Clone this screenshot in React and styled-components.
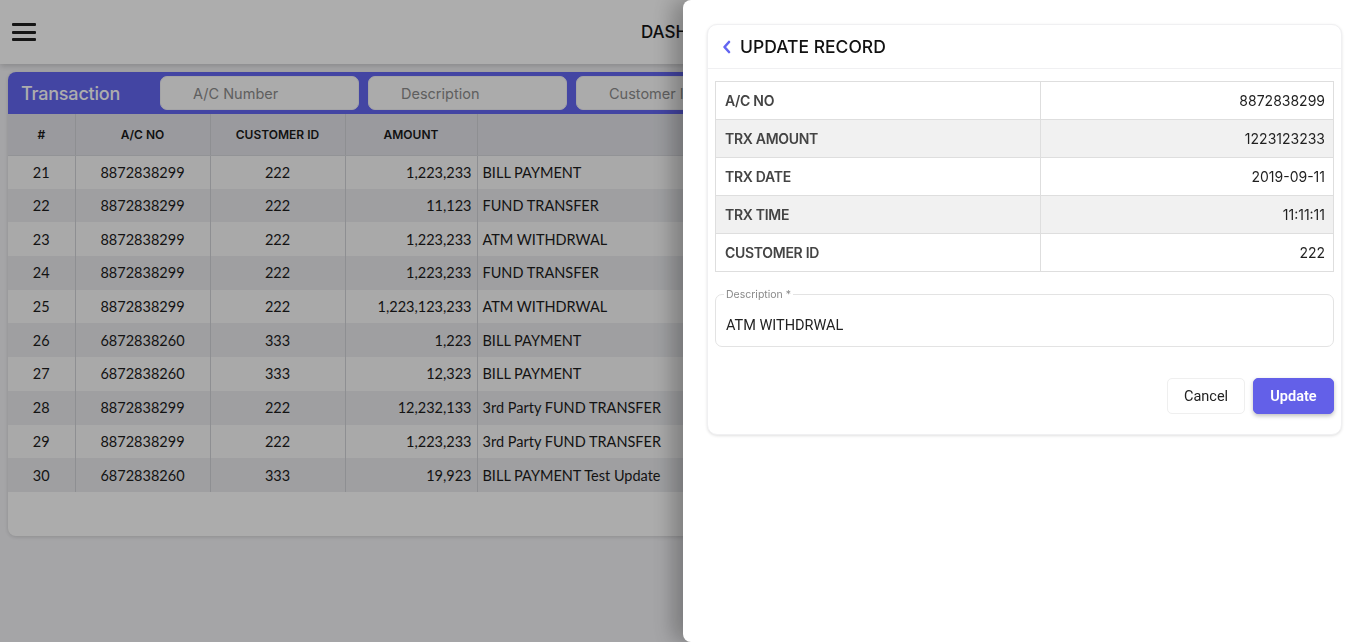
import React from 'react';
import styled, { createGlobalStyle } from 'styled-components';

const GlobalStyle = createGlobalStyle`
  html, body {
    margin: 0;
    padding: 0;
    background: #f4f4f7;
    font-family: Inter, "Liberation Sans", sans-serif;
    overflow: hidden;
  }
  * { box-sizing: border-box; }
`;

const Page = styled.div`
  height: 642px;
  display: flex;
  flex-direction: column;
  gap: 8px;
`;

const TopBar = styled.header`
  height: 64px;
  background: #ffffff;
  box-shadow: 0 2px 6px rgba(0, 0, 0, 0.18);
  display: flex;
  align-items: center;
  padding: 0 12px;
`;

const Burger = styled.button`
  width: 24px;
  height: 18px;
  border: none;
  background: transparent;
  padding: 0;
  display: flex;
  flex-direction: column;
  justify-content: space-between;
  span {
    display: block;
    height: 3px;
    background: #1f1f1f;
    border-radius: 1px;
  }
`;

const BarTitle = styled.h1`
  flex: 1;
  margin: 0;
  text-align: center;
  font-size: 17px;
  font-weight: 500;
  color: #161616;
  padding-right: 24px;
  padding-left: 22px;
`;

const Card = styled.section`
  margin: 0 8px;
  background: #fefefe;
  border-radius: 8px;
  box-shadow: 0 1px 4px rgba(0, 0, 0, 0.15);
  overflow: hidden;
  padding-bottom: 44px;
`;

const CardHead = styled.div`
  height: 42px;
  background: #6366f1;
  display: flex;
  align-items: center;
  padding: 0 4px 0 13px;
  gap: 9px;
`;

const CardTitle = styled.h2`
  margin: 0;
  width: 130px;
  font-size: 18px;
  font-weight: 500;
  color: #ffffff;
  letter-spacing: -0.2px;
`;

const Filter = styled.input`
  width: 199px;
  height: 34px;
  border: 1px solid #f0f0f5;
  border-radius: 7px;
  background: #fcfcfc;
  padding: 0 0 0 32px;
  font-family: Inter, "Liberation Sans", sans-serif;
  font-size: 14.5px;
  color: #333;
  &::placeholder { color: #8c8c8c; }
`;

const Table = styled.table`
  width: 100%;
  border-collapse: collapse;
  font-family: Lato, "Liberation Sans", sans-serif;
`;

const Th = styled.th`
  height: 41px;
  background: #e3e4e9;
  font-family: Inter, "Liberation Sans", sans-serif;
  font-size: 12px;
  font-weight: 600;
  color: #1a1a1a;
  text-align: center;
  border-right: 1px solid #d2d3d8;
  border-bottom: 1px solid #d8d9de;
  width: ${p => p.$w || 'auto'};
`;

const Row = styled.tr`
  height: 33.7px;
  background: ${p => (p.$alt ? '#eaebee' : '#f9f9f9')};
`;

const Td = styled.td`
  font-size: 14.5px;
  color: #1c1c1c;
  padding: 0 5px;
  text-align: ${p => p.$align || 'center'};
  border-right: 1px solid #d2d3d8;
  white-space: nowrap;
`;

const Overlay = styled.div`
  position: fixed;
  inset: 0;
  background: rgba(0, 0, 0, 0.32);
`;

const Drawer = styled.aside`
  position: fixed;
  top: 0;
  right: 0;
  bottom: 0;
  width: 683px;
  background: #ffffff;
  border-radius: 8px 0 0 8px;
  box-shadow: -10px 0 22px rgba(0, 0, 0, 0.28);
  padding: 24px 24px;
`;

const Panel = styled.div`
  background: #fff;
  border: 1px solid #f0f0f2;
  border-radius: 10px;
  box-shadow: 0 1px 3px rgba(0, 0, 0, 0.12);
  padding-bottom: 20px;
`;

const PanelHead = styled.div`
  height: 44px;
  display: flex;
  align-items: center;
  gap: 9px;
  padding: 0 14px;
  border-bottom: 1px solid #f0f0f2;
  color: #6366f1;
`;

const PanelTitle = styled.h3`
  margin: 0;
  font-size: 17.5px;
  font-weight: 500;
  color: #111;
`;

const PanelBody = styled.div`
  padding: 12px 7px 0 7px;
`;

const InfoTable = styled.table`
  width: 100%;
  border-collapse: collapse;
  border: 1px solid #dedede;
`;

const InfoRow = styled.tr`
  height: 38px;
  background: ${p => (p.$alt ? '#f1f1f1' : '#ffffff')};
  border-bottom: 1px solid #dedede;
`;

const InfoLabel = styled.td`
  width: 325px;
  padding: 0 9px;
  font-size: 14px;
  font-weight: 600;
  color: #444;
  border-right: 1px solid #dedede;
  letter-spacing: -0.3px;
`;

const InfoValue = styled.td`
  padding: 0 8px;
  text-align: right;
  font-size: 14px;
  color: #1f1f1f;
`;

const Field = styled.fieldset`
  margin: 15px 0 0;
  height: 60px;
  border: 1px solid #e3e3e3;
  border-radius: 7px;
  padding: 0 10px;
  legend {
    padding: 2px 2px 0;
    margin-left: -2px;
    font-size: 10.5px;
    color: #8a8a8a;
    line-height: 12px;
  }
`;

const FieldText = styled.div`
  font-family: Roboto, Inter, sans-serif;
  font-size: 14.5px;
  color: #222;
  margin-top: 16px;
`;

const Actions = styled.div`
  display: flex;
  justify-content: flex-end;
  gap: 8px;
  margin-top: 31px;
`;

const Btn = styled.button`
  height: 36px;
  padding: 0 16px;
  border-radius: 5px;
  font-family: Roboto, Inter, sans-serif;
  font-size: 14.5px;
  border: 1px solid ${p => (p.$primary ? '#6360e8' : '#efefef')};
  background: ${p => (p.$primary ? '#6360e8' : '#ffffff')};
  color: ${p => (p.$primary ? '#ffffff' : '#222')};
  font-weight: ${p => (p.$primary ? 600 : 400)};
  box-shadow: ${p => (p.$primary ? '0 2px 4px rgba(0,0,0,0.25)' : 'none')};
  width: ${p => (p.$primary ? '81px' : '78px')};
`;

const rows = [
  [21, '8872838299', 222, '1,223,233', 'BILL PAYMENT'],
  [22, '8872838299', 222, '11,123', 'FUND TRANSFER'],
  [23, '8872838299', 222, '1,223,233', 'ATM WITHDRWAL'],
  [24, '8872838299', 222, '1,223,233', 'FUND TRANSFER'],
  [25, '8872838299', 222, '1,223,123,233', 'ATM WITHDRWAL'],
  [26, '6872838260', 333, '1,223', 'BILL PAYMENT'],
  [27, '6872838260', 333, '12,323', 'BILL PAYMENT'],
  [28, '8872838299', 222, '12,232,133', '3rd Party FUND TRANSFER'],
  [29, '8872838299', 222, '1,223,233', '3rd Party FUND TRANSFER'],
  [30, '6872838260', 333, '19,923', 'BILL PAYMENT Test Update'],
];

const info = [
  ['A/C NO', '8872838299'],
  ['TRX AMOUNT', '1223123233'],
  ['TRX DATE', '2019-09-11'],
  ['TRX TIME', '11:11:11'],
  ['CUSTOMER ID', '222'],
];

const App = () => (
  <>
    <GlobalStyle />
    <Page>
      <TopBar>
        <Burger aria-label="menu">
          <span />
          <span />
          <span />
        </Burger>
        <BarTitle>DASHBOARD</BarTitle>
      </TopBar>
      <Card>
        <CardHead>
          <CardTitle>Transaction</CardTitle>
          <Filter placeholder="A/C Number" />
          <Filter placeholder="Description" />
          <Filter placeholder="Customer Id" />
          <Filter placeholder="Amount" />
        </CardHead>
        <Table>
          <thead>
            <tr>
              <Th $w="67px">#</Th>
              <Th $w="135px">A/C NO</Th>
              <Th $w="135px">CUSTOMER ID</Th>
              <Th $w="132px">AMOUNT</Th>
              <Th>DESCRIPTION</Th>
            </tr>
          </thead>
          <tbody>
            {rows.map((r, i) => (
              <Row key={r[0]} $alt={i % 2 === 1}>
                <Td>{r[0]}</Td>
                <Td>{r[1]}</Td>
                <Td>{r[2]}</Td>
                <Td $align="right">{r[3]}</Td>
                <Td $align="left">{r[4]}</Td>
              </Row>
            ))}
          </tbody>
        </Table>
      </Card>
    </Page>
    <Overlay />
    <Drawer>
      <Panel>
        <PanelHead>
          <svg width="9" height="14" viewBox="0 0 9 14" fill="none">
            <path d="M7 2 L2.5 7 L7 12" stroke="currentColor" strokeWidth="2.6" strokeLinecap="round" strokeLinejoin="round" />
          </svg>
          <PanelTitle>UPDATE RECORD</PanelTitle>
        </PanelHead>
        <PanelBody>
          <InfoTable>
            <tbody>
              {info.map(([k, v], i) => (
                <InfoRow key={k} $alt={i % 2 === 1}>
                  <InfoLabel>{k}</InfoLabel>
                  <InfoValue>{v}</InfoValue>
                </InfoRow>
              ))}
            </tbody>
          </InfoTable>
          <Field>
            <legend>Description *</legend>
            <FieldText>ATM WITHDRWAL</FieldText>
          </Field>
          <Actions>
            <Btn>Cancel</Btn>
            <Btn $primary>Update</Btn>
          </Actions>
        </PanelBody>
      </Panel>
    </Drawer>
  </>
);

export default App;
